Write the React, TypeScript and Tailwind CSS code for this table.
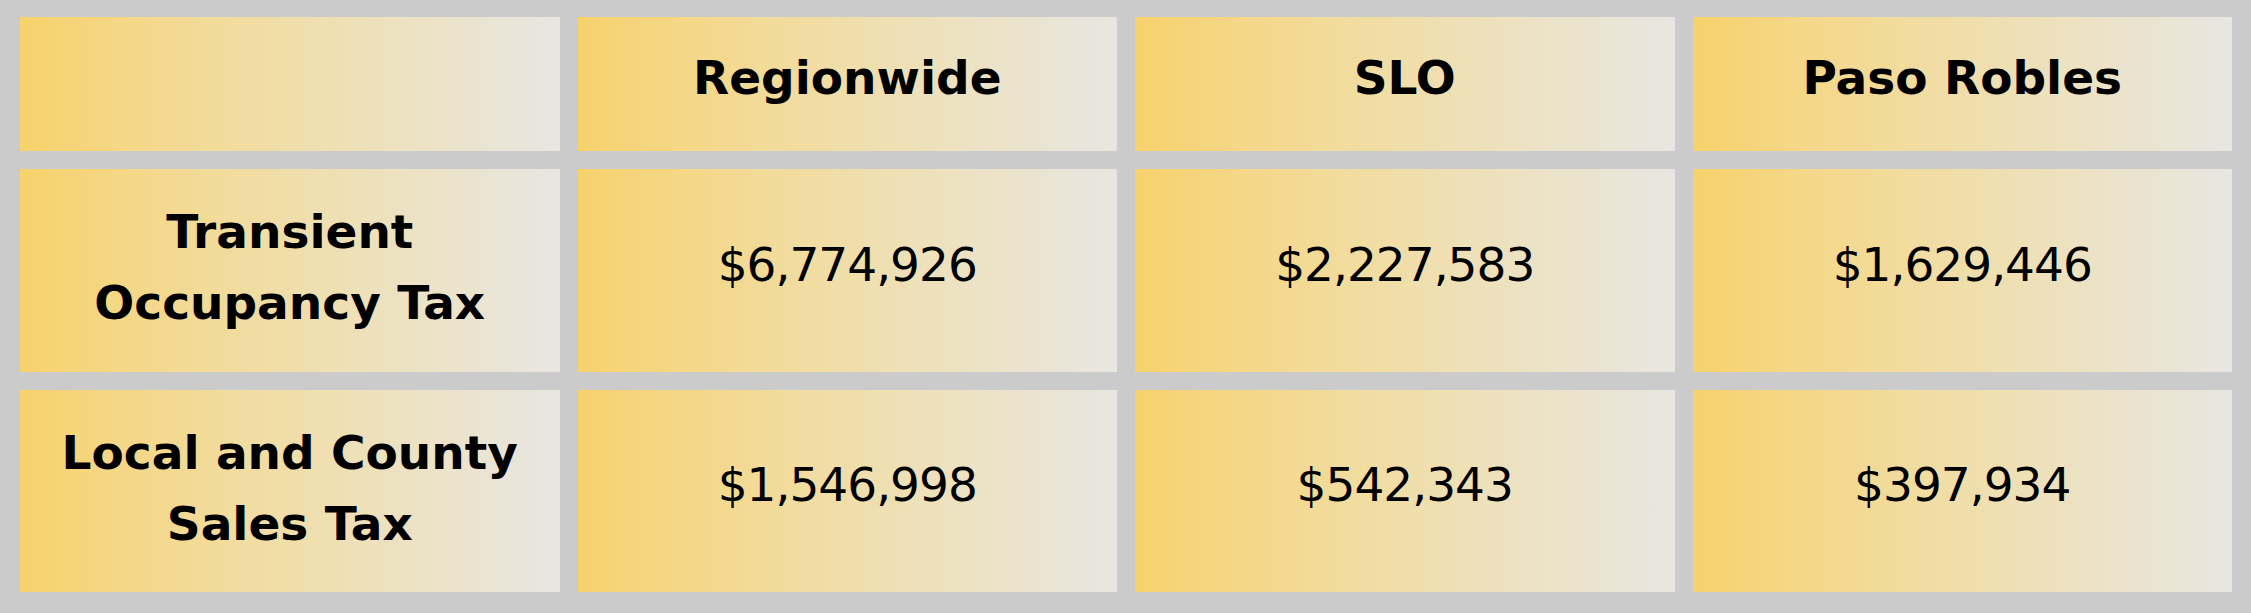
import React from "react";

const headers = ["", "Regionwide", "SLO", "Paso Robles"];
const rows: { label: string[]; values: string[] }[] = [
  { label: ["Transient", "Occupancy Tax"], values: ["$6,774,926", "$2,227,583", "$1,629,446"] },
  { label: ["Local and County", "Sales Tax"], values: ["$1,546,998", "$542,343", "$397,934"] },
];

const cell =
  "flex flex-col items-center justify-center text-center bg-gradient-to-r from-[#f7d26c] via-[#f0deaa] to-[#e8e6e1] text-black";

export default function App() {
  return (
    <div className="w-[2251px] h-[613px] bg-[#cbcbcb] pt-[17px] pl-[20px] pr-[19px] pb-[21px]">
      <div className="grid grid-cols-4 grid-rows-[134px_203px_202px] gap-x-[18px] gap-y-[18px] h-full">
        {headers.map((h, i) => (
          <div
            key={i}
            className={`${cell} pb-[11px] font-bold text-[47px] [font-family:'DejaVu_Sans',sans-serif]`}
          >
            {h}
          </div>
        ))}
        {rows.map((r, ri) => (
          <React.Fragment key={ri}>
            <div className={`${cell} pb-[7px] font-bold text-[47px] leading-[71px] [font-family:'DejaVu_Sans',sans-serif]`}>
              {r.label.map((l, li) => (
                <div key={li}>{l}</div>
              ))}
            </div>
            {r.values.map((v, vi) => (
              <div
                key={vi}
                className={`${cell} pb-[11px] text-[47px] tracking-[-1px] [font-family:'DejaVu_Sans',sans-serif]`}
              >
                {v}
              </div>
            ))}
          </React.Fragment>
        ))}
      </div>
    </div>
  );
}
